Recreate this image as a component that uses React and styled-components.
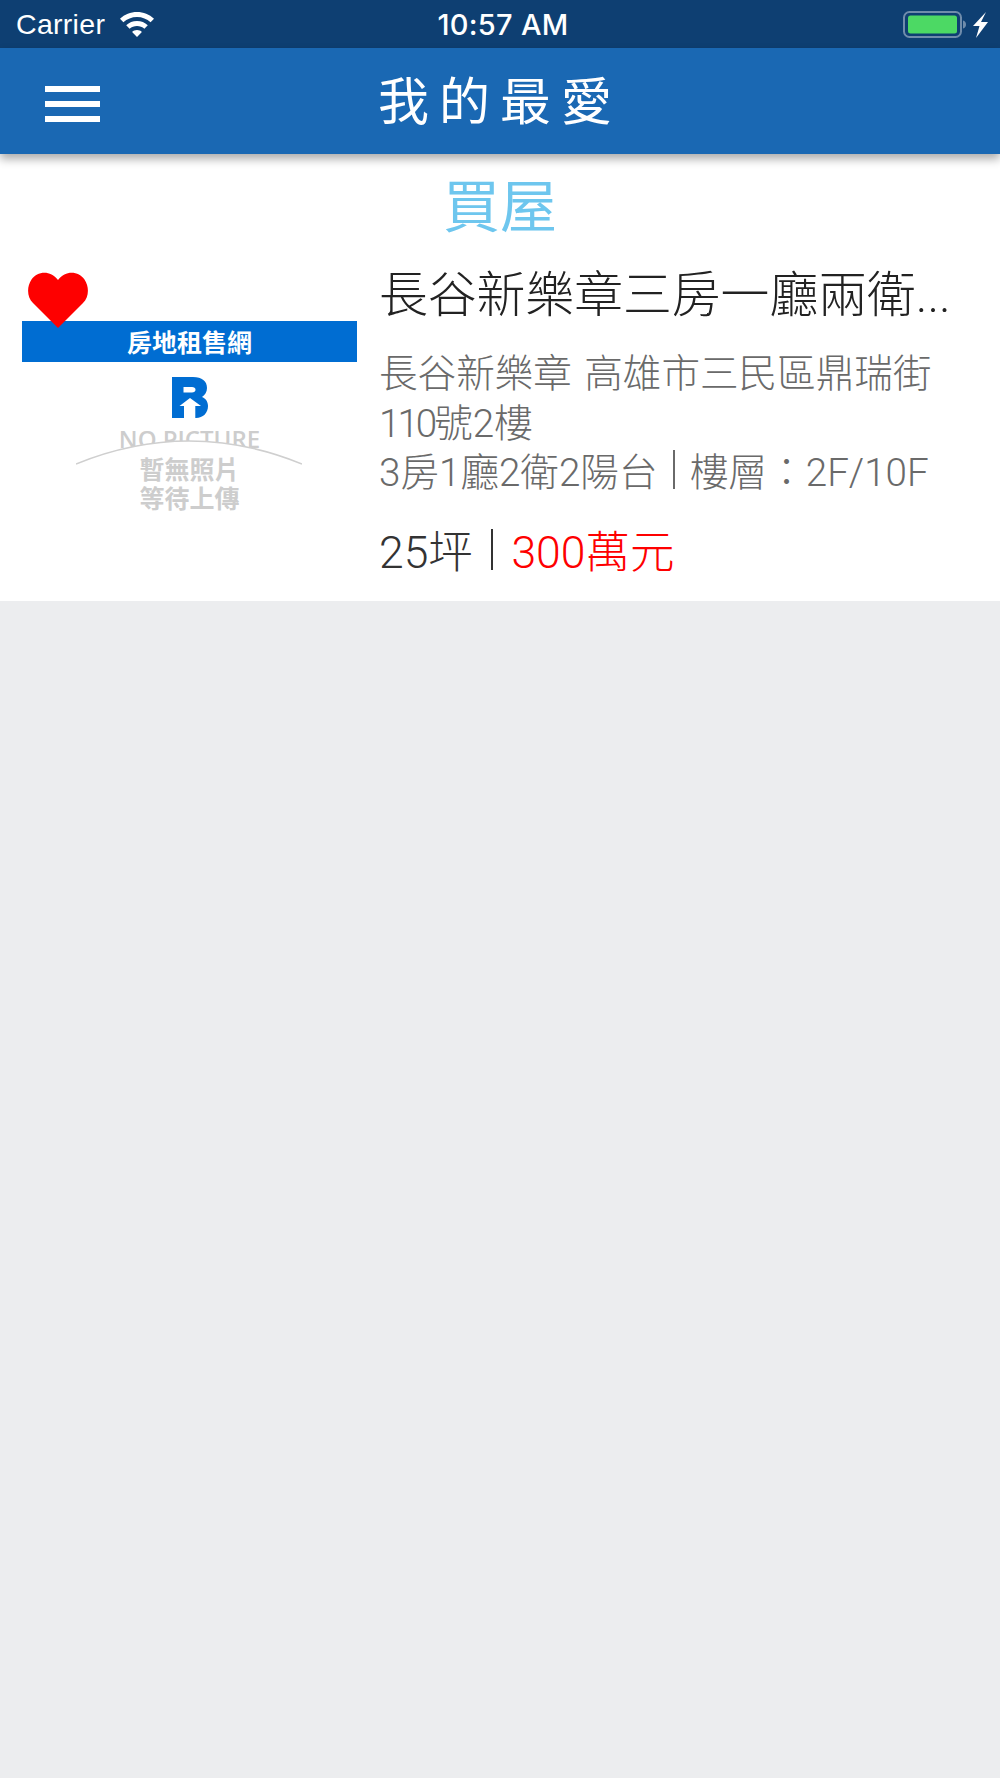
import React from 'react';
import styled, { createGlobalStyle } from 'styled-components';

const Global = createGlobalStyle`
  html, body { margin: 0; padding: 0; background: #ecedef; }
  body { font-family: "Roboto", "Noto Sans CJK TC", sans-serif; }
  * { box-sizing: border-box; }
`;
const Page = styled.div`
  min-height: 1778px;
  display: flex;
  flex-direction: column;
  background: #ecedef;
`;
const StatusBar = styled.div`
  height: 48px;
  background: #0e3f72;
  color: #fff;
  display: grid;
  grid-template-columns: 1fr auto 1fr;
  align-items: center;
  padding: 0 10px 0 16px;
`;
const Carrier = styled.div`
  display: flex;
  align-items: center;
  gap: 14px;
  font-family: "Liberation Sans", sans-serif;
  font-size: 28.5px;
  letter-spacing: 0.3px;
  line-height: 1;
`;
const Time = styled.div`
  font-family: "Inter", "Liberation Sans", sans-serif;
  font-size: 29px;
  font-weight: 500;
  line-height: 1;
  letter-spacing: 0.3px;
`;
const BatteryGroup = styled.div`
  display: flex;
  justify-content: flex-end;
  align-items: center;
`;
const NavBar = styled.header`
  height: 106px;
  background: #1a68b3;
  box-shadow: 0 5px 9px rgba(0, 0, 0, 0.33);
  display: grid;
  grid-template-columns: 1fr auto 1fr;
  align-items: center;
  padding: 0 45px;
  position: relative;
  z-index: 1;
`;
const Menu = styled.div`
  width: 55px;
  display: flex;
  flex-direction: column;
  gap: 9px;
  padding-top: 5px;
`;
const MenuBar = styled.span`
  display: block;
  height: 6px;
  background: #fff;
`;
const NavTitle = styled.h1`
  margin: 0 0 5px;
  color: #fff;
  font-family: "Noto Sans CJK TC", sans-serif;
  font-size: 51px;
  font-weight: 400;
  letter-spacing: 10px;
  line-height: 1;
`;
const Section = styled.section`
  background: #fff;
  display: flex;
  flex-direction: column;
`;
const SectionTitle = styled.h2`
  margin: 0;
  height: 104px;
  padding-top: 14px;
  text-align: center;
  color: #6ec6ee;
  font-family: "Noto Sans CJK TC", sans-serif;
  font-size: 57px;
  font-weight: 400;
  line-height: 68px;
`;
const Item = styled.article`
  display: flex;
  gap: 22px;
  padding: 0 22px;
  height: 343px;
`;
const Thumb = styled.div`
  width: 335px;
  flex: none;
  padding-top: 63px;
  position: relative;
  display: flex;
  flex-direction: column;
  align-items: center;
`;
const Heart = styled.svg`
  position: absolute;
  left: 6px;
  top: 14px;
  width: 60px;
  height: 56px;
`;
const Banner = styled.div`
  width: 100%;
  height: 41px;
  background: #006dd2;
  color: #fff;
  font-family: "Noto Sans CJK TC", sans-serif;
  font-size: 25px;
  font-weight: 700;
  line-height: 41px;
  text-align: center;
`;
const Logo = styled.svg`
  margin-top: 15px;
  width: 36px;
  height: 41px;
`;
const NoPicture = styled.div`
  margin-top: 7px;
  height: 27px;
  color: #cdcdcd;
  font-family: "Open Sans", sans-serif;
  font-size: 24px;
  font-weight: 600;
  line-height: 27px;
`;
const Arc = styled.svg`
  position: absolute;
  left: 54px;
  top: 182px;
  width: 226px;
  height: 32px;
`;
const Waiting = styled.div`
  margin-top: 2px;
  color: #cdcdcd;
  font-family: "Noto Sans CJK TC", sans-serif;
  font-size: 25px;
  font-weight: 700;
  line-height: 29px;
  text-align: center;
  position: relative;
`;
const Body = styled.div`
  flex: 1;
  min-width: 0;
`;
const Title = styled.h3`
  margin: 0;
  padding-top: 7px;
  color: #222;
  font-size: 48.8px;
  font-weight: 300;
  line-height: 62px;
  white-space: nowrap;
`;
const Detail = styled.p`
  margin: 22px 0 0;
  color: #6a6a6a;
  font-size: 38.6px;
  font-weight: 300;
  line-height: 49.5px;
  word-spacing: 3px;
`;
const Tight = styled.span`
  letter-spacing: -3px;
`;
const Rule = styled.span`
  display: inline-block;
  width: 2.5px;
  height: ${(p) => p.$h}px;
  margin: 0 ${(p) => p.$m}px;
  background: currentColor;
  vertical-align: ${(p) => p.$v}px;
`;
const Price = styled.p`
  margin: 25px 0 0;
  color: #333;
  font-size: 44.5px;
  font-weight: 300;
  line-height: 60px;
`;
const Money = styled.span`
  color: #fe0000;
`;

export default function App() {
  return (
    <Page>
      <Global />
      <StatusBar>
        <Carrier>
          Carrier
          <svg width="36" height="26" viewBox="0 0 36 26">
            <path fill="#fff" d="M18 1C11.5 1 5.7 3.4 1 7.7l3.4 3.6C8 8 12.8 6 18 6s10 2 13.6 5.3L35 7.7C30.300 3.400 24.500 1 18 1z" />
            <path fill="#fff" d="M18 10c-4.200 0-7.900 1.500-10.800 4.200l3.400 3.600C12.600 16 15.200 15 18 15s5.400 1 7.400 2.800l3.400-3.600C25.900 11.500 22.200 10 18 10z" />
            <path fill="#fff" d="M18 19c-2 0-3.600.7-4.900 1.900L18 26l4.900-5.100C21.600 19.700 20 19 18 19z" />
          </svg>
        </Carrier>
        <Time>10:57 AM</Time>
        <BatteryGroup>
          <svg width="88" height="30" viewBox="0 0 88 30">
            <rect x="2" y="3" width="57" height="25" rx="5.500" fill="none" stroke="#6f8cab" strokeWidth="2" />
            <rect x="6" y="6.500" width="49" height="18" rx="2.500" fill="#4cd964" />
            <path d="M61 11.500c2 .4 3 2 3 4s-1 3.600-3 4z" fill="#6f8cab" />
            <path fill="#fff" d="M84 3 71 17h6.500L74 29l12-16h-7z" />
          </svg>
        </BatteryGroup>
      </StatusBar>
      <NavBar>
        <Menu>
          <MenuBar />
          <MenuBar />
          <MenuBar />
        </Menu>
        <NavTitle>我的最愛</NavTitle>
        <span />
      </NavBar>
      <Section>
        <SectionTitle>買屋</SectionTitle>
        <Item>
          <Thumb>
            <Banner>房地租售網</Banner>
            <Logo viewBox="0 0 36 41">
              <path
                fill="#006dd2"
                fillRule="evenodd"
                d="M0 0h21c9 0 14 4 14 11 0 4-2 7-5 9 3 1 6 4 6 9 0 7-5 12-12 12h-.700V29h5.700L18 21 7.500 29H12v12H0zM11.500 10v5.500H20c2 0 3.500-1 3.500-2.800S22 10 20 10z"
              />
            </Logo>
            <NoPicture>NO PICTURE</NoPicture>
            <Arc viewBox="0 0 226 32">
              <path d="M0 24Q113 -22 226 24V32H0z" fill="#fff" />
              <path d="M0 24Q113 -22 226 24" fill="none" stroke="#cfcfcf" strokeWidth="1.500" />
            </Arc>
            <Waiting>
              暫無照片
              <br />
              等待上傳
            </Waiting>
            <Heart viewBox="0 0 60 56">
              <path
                fill="#fe0000"
                d="M30 56 5 31C-1 25-1.500 15 3.500 7.500 9 -.5 22-2.500 30 8 38-2.500 51-.5 56.500 7.500 61.500 15 61 25 55 31z"
              />
            </Heart>
          </Thumb>
          <Body>
            <Title>長谷新樂章三房一廳兩衛...</Title>
            <Detail>
              長谷新樂章 高雄市三民區鼎瑞街
              <br />
              <Tight>110</Tight>號2樓
              <br />
              3房1廳2衛2陽台
              <Rule $h={39} $m={15} $v={-3} />
              樓層：2F/10F
            </Detail>
            <Price>
              25坪
              <Rule $h={41} $m={18} $v={-2} />
              <Money>300萬元</Money>
            </Price>
          </Body>
        </Item>
      </Section>
    </Page>
  );
}
